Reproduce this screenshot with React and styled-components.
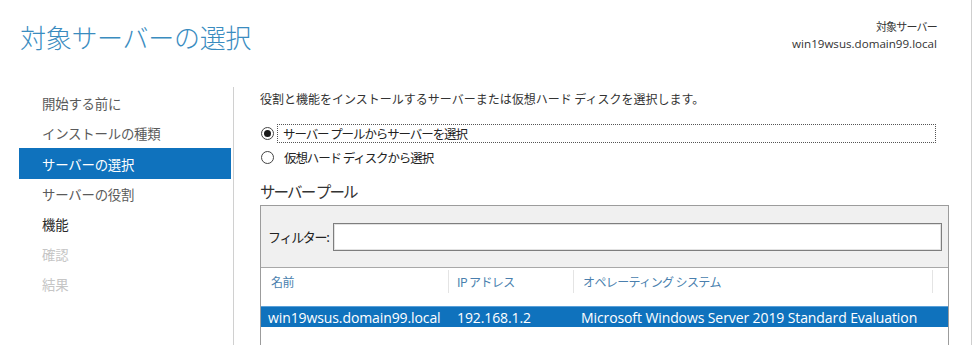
import React from 'react'
import styled, { createGlobalStyle } from 'styled-components'

const GlobalStyle = createGlobalStyle`
  html, body {
    margin: 0;
    padding: 0;
    background: #ffffff;
  }
  body {
    font-family: "Noto Sans CJK JP", "Open Sans", sans-serif;
    color: #3c3c3c;
  }
`

const Page = styled.div`
  width: 971px;
  height: 345px;
  overflow: hidden;
  border-right: 1px solid #cfcfcf;
  background: #ffffff;
  display: flex;
  flex-direction: column;
`

const Header = styled.header`
  height: 87px;
  display: flex;
  justify-content: space-between;
  align-items: flex-start;
  padding: 0 34px 0 20px;
  box-sizing: border-box;
`

const Title = styled.h1`
  margin: 17px 0 0 0;
  font-family: "Noto Sans CJK JP", sans-serif;
  font-weight: 300;
  font-size: 26px;
  line-height: 40px;
  letter-spacing: -0.3px;
  color: #3a8cbf;
`

const TargetInfo = styled.div`
  margin-top: 18px;
  display: flex;
  flex-direction: column;
  align-items: flex-end;
  font-size: 11px;
  line-height: 17px;
  color: #333;
`

const TargetLabel = styled.span`
  font-family: "Noto Sans CJK JP", sans-serif;
  letter-spacing: -0.8px;
`

const TargetName = styled.span`
  font-family: "Open Sans", sans-serif;
  font-size: 11.6px;
`

const Body = styled.div`
  flex: 1;
  display: flex;
`

const Nav = styled.nav`
  width: 234px;
  box-sizing: border-box;
  padding: 1px 2px 0 19px;
  border-right: 1px solid #d0d0d0;
  display: flex;
  flex-direction: column;
`

const NavItem = styled.div`
  height: ${p => (p.$active ? 31 : 30)}px;
  display: flex;
  align-items: center;
  padding-left: 23px;
  font-size: 13.4px;
  letter-spacing: -0.2px;
  background: ${p => (p.$active ? '#0f72bd' : 'transparent')};
  color: ${p =>
    p.$active ? '#ffffff' : p.$disabled ? '#c6c6c6' : p.$strong ? '#2a2a2a' : '#5a5a5a'};
`

const Content = styled.div`
  flex: 1;
  padding: 3px 0 0 26px;
  display: flex;
  flex-direction: column;
`

const Description = styled.p`
  margin: 0;
  font-size: 12px;
  line-height: 18px;
  letter-spacing: 0;
  color: #333;
`

const RadioGroup = styled.div`
  margin-top: 16px;
  display: flex;
  flex-direction: column;
  gap: 5px;
`

const RadioRow = styled.label`
  display: flex;
  align-items: center;
  gap: 3px;
`

const RadioCircle = styled.span`
  width: 13px;
  height: 13px;
  box-sizing: border-box;
  border-radius: 50%;
  border: 1px solid #444;
  background: #fff;
  display: flex;
  align-items: center;
  justify-content: center;
  margin-left: 1px;

  &::after {
    content: '';
    width: 7px;
    height: 7px;
    border-radius: 50%;
    background: ${p => (p.$checked ? '#1a1a1a' : 'transparent')};
  }
`

const RadioLabel = styled.span`
  width: ${p => (p.$focused ? '659px' : 'auto')};
  height: 19px;
  box-sizing: border-box;
  display: flex;
  align-items: center;
  padding-left: ${p => (p.$focused ? 5 : 6)}px;
  border: 1px dotted ${p => (p.$focused ? '#555' : 'transparent')};
  font-size: 12.5px;
  letter-spacing: -1.1px;
  color: #222;
`

const PoolHeading = styled.h2`
  margin: 13px 0 0 0;
  font-weight: 400;
  font-size: 15.5px;
  line-height: 22px;
  letter-spacing: -1.9px;
  color: #333;
`

const PoolBox = styled.div`
  margin-top: 3px;
  width: 689px;
  flex: 1;
  box-sizing: border-box;
  border: 1px solid #9c9c9c;
  border-bottom: none;
  display: flex;
  flex-direction: column;
`

const FilterBar = styled.div`
  height: 61px;
  background: #f0f0f0;
  border-bottom: 1px solid #a8a8a8;
  display: flex;
  align-items: center;
  padding: 0 6px 0 7px;
  gap: 4px;
`

const FilterLabel = styled.span`
  font-size: 13px;
  letter-spacing: -1.3px;
  color: #222;
`

const FilterInput = styled.div`
  flex: 1;
  height: 28px;
  box-sizing: border-box;
  background: #fff;
  border: 1px solid #7e7e7e;
  box-shadow: inset 0 0 0 1px #e2e2e2;
`

const TableHead = styled.div`
  display: flex;
  height: 38px;
  align-items: flex-start;
`

const HeadCell = styled.div`
  width: ${p => p.$w}px;
  height: 23px;
  box-sizing: border-box;
  padding-left: ${p => p.$pad}px;
  border-right: ${p => (p.$line ? '1px solid #e4e4e4' : 'none')};
  display: flex;
  align-items: center;
  font-size: 12px;
  letter-spacing: -0.6px;
  color: #4a7fae;
  margin-top: 2px;
`

const Row = styled.div`
  display: flex;
  height: 20px;
  align-items: center;
  background: ${p => (p.$selected ? '#0f72bd' : 'transparent')};
  color: ${p => (p.$selected ? '#ffffff' : '#333')};
  border-top: 1px solid ${p => (p.$selected ? '#5aa0d8' : 'transparent')};
`

const Cell = styled.div`
  width: ${p => p.$w}px;
  box-sizing: border-box;
  padding-left: ${p => p.$pad}px;
  font-family: "Open Sans", "Noto Sans CJK JP", sans-serif;
  font-size: 14px;
  letter-spacing: -0.1px;
  white-space: nowrap;
`

const steps = [
  { label: '開始する前に' },
  { label: 'インストールの種類' },
  { label: 'サーバーの選択', active: true },
  { label: 'サーバーの役割' },
  { label: '機能', strong: true },
  { label: '確認', disabled: true },
  { label: '結果', disabled: true },
]

const columns = [
  { w: 188, pad: 10, label: '名前' },
  { w: 125, pad: 8, label: 'IP アドレス' },
  { w: 359, pad: 9, label: 'オペレーティング システム' },
]

const App = () => {
  return (
    <Page>
      <GlobalStyle />
      <Header>
        <Title>対象サーバーの選択</Title>
        <TargetInfo>
          <TargetLabel>対象サーバー</TargetLabel>
          <TargetName>win19wsus.domain99.local</TargetName>
        </TargetInfo>
      </Header>
      <Body>
        <Nav>
          {steps.map(s => (
            <NavItem key={s.label} $active={s.active} $disabled={s.disabled} $strong={s.strong}>
              {s.label}
            </NavItem>
          ))}
        </Nav>
        <Content>
          <Description>
            役割と機能をインストールするサーバーまたは仮想ハード ディスクを選択します。
          </Description>
          <RadioGroup>
            <RadioRow>
              <RadioCircle $checked />
              <RadioLabel $focused>サーバー プールからサーバーを選択</RadioLabel>
            </RadioRow>
            <RadioRow>
              <RadioCircle />
              <RadioLabel>仮想ハード ディスクから選択</RadioLabel>
            </RadioRow>
          </RadioGroup>
          <PoolHeading>サーバー プール</PoolHeading>
          <PoolBox>
            <FilterBar>
              <FilterLabel>フィルター:</FilterLabel>
              <FilterInput />
            </FilterBar>
            <TableHead>
              {columns.map(c => (
                <HeadCell key={c.label} $w={c.w} $pad={c.pad} $line>
                  {c.label}
                </HeadCell>
              ))}
            </TableHead>
            <Row $selected>
              <Cell $w={188} $pad={7}>win19wsus.domain99.local</Cell>
              <Cell $w={125} $pad={8}>192.168.1.2</Cell>
              <Cell $w={370} $pad={7}>Microsoft Windows Server 2019 Standard Evaluation</Cell>
            </Row>
          </PoolBox>
        </Content>
      </Body>
    </Page>
  )
}

export default App
